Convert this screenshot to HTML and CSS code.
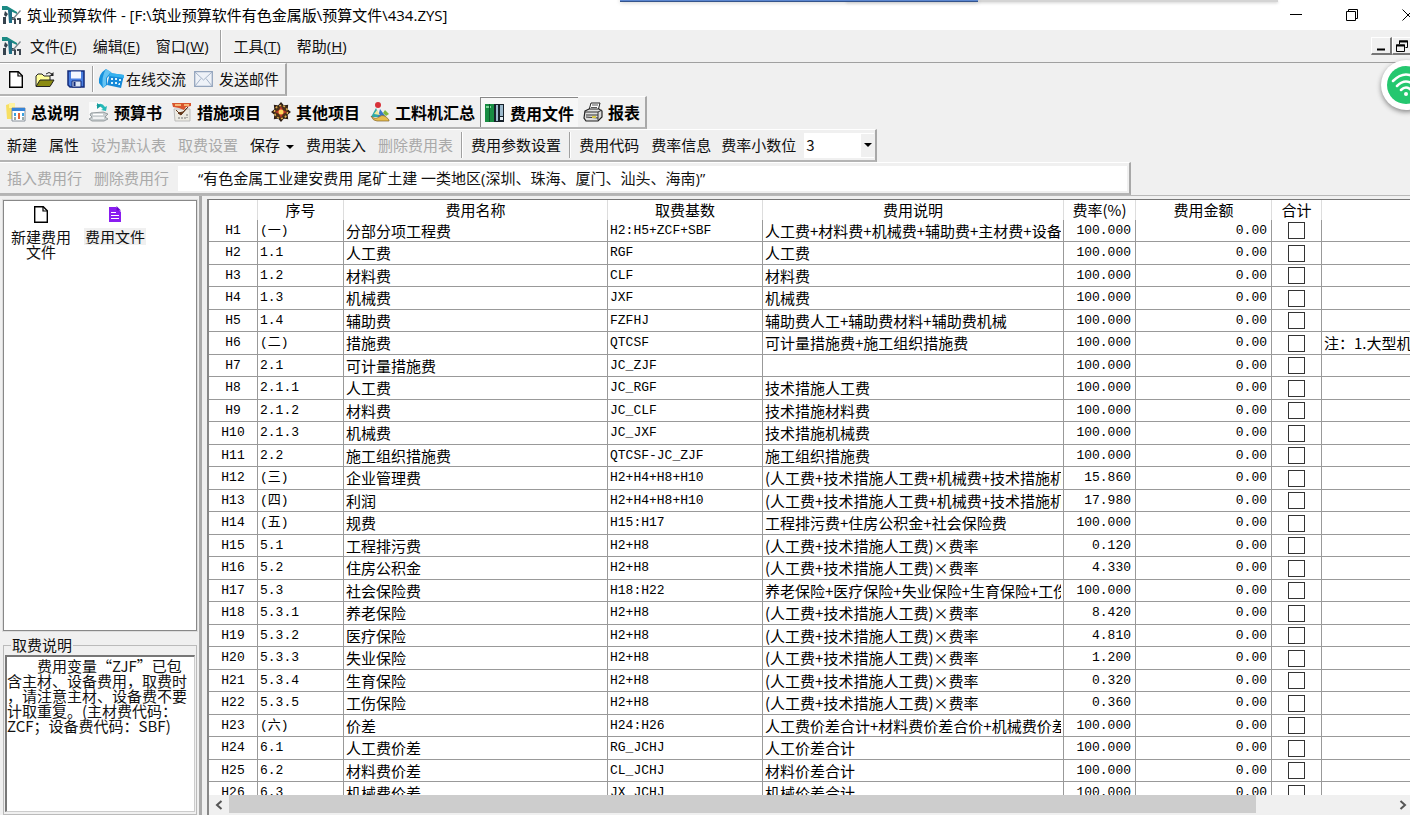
FILE: index.html
```html
<!DOCTYPE html>
<html lang="zh-CN">
<head>
<meta charset="utf-8">
<title>筑业预算软件</title>
<link rel="stylesheet" href="styles.css">
</head>
<body>
<svg class="defs" width="0" height="0" aria-hidden="true">
  <symbol id="logo" viewBox="0 0 20 20">
    <path d="M0 1h5l10 6v2L6 5H0z" fill="#1c8a84"/>
    <path d="M6 5h4v13H7z" fill="#1f6f86"/>
    <path d="M1 12h3v7H1zM3 6l3 3-2 3-2-2z" fill="#35424d"/>
    <path d="M10 12h2l2 2v5h-2v-4h-2zM15 13h4v6h-2v-4h-2z" fill="#3c4650"/>
    <path d="M18 5l1 1-8 9-1-1z" fill="#7a858c"/>
  </symbol>
  <symbol id="page" viewBox="0 0 14 17">
    <path d="M.7.7h8.600l4 4v11.600H.7z" fill="#fff" stroke="#000" stroke-width="1.400"/>
    <path d="M9 .7v4.300h4.300" fill="none" stroke="#000" stroke-width="1.200"/>
  </symbol>
</svg>
<div class="app">
  <div class="strip strip-blue"></div>
  <div class="strip strip-gray"></div>
  <header class="title">
    <svg class="logo"><use href="#logo"/></svg>
    <h1>筑业预算软件 - [F:\筑业预算软件有色金属版\预算文件\434.ZYS]</h1>
    <div class="win">
      <button aria-label="最小化"><svg width="12" height="12"><path d="M0 5.500h12" stroke="#000"/></svg></button>
      <button aria-label="还原"><svg width="12" height="12" fill="none" stroke="#000"><path d="M.5 2.500h9v9h-9zM2.500 2.500v-2h9v9h-2"/></svg></button>
      <button aria-label="关闭"><svg width="12" height="12"><path d="M.5.5l11 11M11.500.5l-11 11" stroke="#000"/></svg></button>
    </div>
  </header>
  <nav class="menu">
    <svg class="logo"><use href="#logo"/></svg>
    <button>文件(<u>F</u>)</button><button>编辑(<u>E</u>)</button><button>窗口(<u>W</u>)</button>
    <i class="sep"></i>
    <button>工具(<u>T</u>)</button><button>帮助(<u>H</u>)</button>
    <div class="mdi">
      <button aria-label="最小化文档"><svg width="10" height="10"><path d="M1 8.500h8" stroke="#000" stroke-width="2"/></svg></button>
      <button aria-label="还原文档"><svg width="12" height="12" fill="none" stroke="#000"><path d="M.5 5h8v6.500h-8zM3.500 4V1h8v6.500h-2"/><path d="M0 5.500h9M3 1.500h9" stroke-width="2"/></svg></button>
    </div>
  </nav>
  <div class="bar files">
    <button aria-label="新建"><svg width="14" height="17"><use href="#page"/></svg></button>
    <button aria-label="打开"><svg width="20" height="17"><path d="M1 15V5l2-2h4l2 2h6v4" fill="#ffff9c" stroke="#222"/><path d="M1 15.500L5 9h14l-4 6.500z" fill="#8a8a10" stroke="#222"/><path d="M11 3q3-3 6 0" fill="none" stroke="#222"/><path d="M18.500 1v4h-4z" fill="#222"/></svg></button>
    <button aria-label="保存"><svg width="18" height="18"><path d="M1 1h16v16H3l-2-2z" fill="#4a7fe0" stroke="#122a78" stroke-width="1.500"/><path d="M4 1.500h10v7H4z" fill="#f4f8ff"/><path d="M5 11h9v6H5z" fill="#dce6f6" stroke="#122a78"/><path d="M6.500 12h2v4h-2z" fill="#122a78"/></svg></button>
    <i class="sep"></i>
    <button class="tool chat"><svg width="27" height="22"><path d="M8 1q-8 5-7 14l4 5 4-3V10l5-5z" fill="#1791dc"/><path d="M8 1l5 3-5 6v7l-3 3q-2-11 3-19z" fill="#66c4f3"/><path d="M12 5l14 2-3 13-14-3z" fill="#1689d8"/><path d="M12 5l14 2v3L11 8z" fill="#35b2ef"/><path d="M13 10h2v2h-2zm4 0h2v2h-2zm4 1h2v2h-2zm-8 3h2v2h-2zm4 0h2v2h-2zm4 1h1v2h-2z" fill="#d9f4ff"/></svg>在线交流</button>
    <button class="tool mail"><svg width="19" height="16"><path d="M.7.7h17.600v14.600H.7z" fill="#eef2f8" stroke="#94a5bd" stroke-width="1.300"/><path d="M1 1l8.500 8L18 1M1 15l6-7.500M18 15l-6-7.500" fill="none" stroke="#a3b2c8"/></svg>发送邮件</button>
  </div>
  <div class="bar views">
    <button><svg viewBox="0 0 20 20"><path d="M0 3l3-1 2 2 4-2v6H6v9H1z" fill="#f7df62"/><path d="M3 1h6v5H3z" fill="#fff3a0"/><path d="M6 6h13v13H6z" fill="#fff" stroke="#87909a"/><path d="M6 6h13v3H6z" fill="#3684d8"/><path d="M8 11h2v3H8zm8 0h2v3h-2z" fill="#3aa0de"/><path d="M12 11h2v6h-2z" fill="#e2663a"/><path d="M8 15h2v3H8zm8 0h2v3h-2z" fill="#9aa"/></svg>总说明</button>
    <button><svg viewBox="0 0 20 20"><path d="M0 0h14v19H0z" fill="#fafafa"/><path d="M7 4q5-5 9 1l2-1-1 5-5-1 2-1q-3-4-7-3z" fill="#25b9b8"/><path d="M8 1l4 3-4 3z" fill="#179d9c"/><path d="M2 11l12-1 5 2-3 3 3 2-4 2H3l-3-2 3-2-2-2z" fill="#c9ced0" stroke="#858d90" stroke-width=".8"/><path d="M4 12.500h10M4 16h11" stroke="#fff" stroke-width="1.500"/></svg>预算书</button>
    <button><svg viewBox="0 0 20 20"><path d="M2 7h16v12H3z" fill="#eceae2" stroke="#bbb"/><path d="M0 1h19v3l-5 1-2 3-5-2-6-1z" fill="#d8552d"/><path d="M3 3h6M12 3h5" stroke="#ffd58a" stroke-width="1.500"/><path d="M16 5l-7 8-3-2 5-1zM4 8l5 5" fill="#62371a" stroke="#62371a"/><path d="M6 16h8M15 12v4" stroke="#777" stroke-dasharray="2 1"/></svg>措施项目</button>
    <button><svg viewBox="0 0 20 20"><path d="M10 1l2.500 3 4-.5-.5 4 3 2.500-3 2.500.5 4-4-.5-2.500 3-2.500-3-4 .5.5-4L1 10l3-2.500-.5-4 4 .5z" fill="#4a3218" stroke="#2a1c14" stroke-width="1.200"/><circle cx="10" cy="10" r="6.500" fill="none" stroke="#e0b050" stroke-width="1.500" stroke-dasharray="2 2"/><path d="M10 4l2 4 4 2-4 2-2 4-2-4-4-2 4-2z" fill="#bb3629"/><circle cx="10" cy="10" r="2.500" fill="#ffd65a"/></svg>其他项目</button>
    <button><svg viewBox="0 0 20 20"><circle cx="8" cy="3" r="3" fill="#d8323a"/><path d="M6 6l-5 9h9z" fill="#2fa8a5"/><path d="M10 7l6 8H8z" fill="#3676c8"/><path d="M15 8l4 4-3 2-3-3z" fill="#80b83d"/><path d="M1 14q4 4 8 1 5-4 10 3v1H7q-4 0-6-5z" fill="#e8bd4b" stroke="#836630" stroke-width=".7"/><path d="M4 12l3-4 3 5z" fill="#f3e7a0"/></svg>工料机汇总</button>
    <button class="on" aria-pressed="true"><svg viewBox="0 0 20 20"><path d="M0 1h9v18H0z" fill="#188c42"/><path d="M1 3h5v2H1z" fill="#7ed59b"/><path d="M4 1h1v18H4z" fill="#0b5c2a"/><path d="M9 1h10v18H9z" fill="#17212a"/><path d="M11 2h2v16h-2zm4 0h3v11h-3z" fill="#9cb9cc"/><path d="M15 14h3v3h-3z" fill="#e5eef4"/></svg>费用文件</button>
    <button><svg viewBox="0 0 20 20"><path d="M6 8l2-7h9l-2 8z" fill="#fff" stroke="#222"/><path d="M9 3h6M8 5.500h6" stroke="#555"/><path d="M2 9l4-2h10l3 2v6l-4 4H3l-2-3z" fill="#ddd" stroke="#222" stroke-width="1.200"/><path d="M2 10h13v8M15 10l4-2M3 15l12 1M3 13h12" fill="none" stroke="#333"/><path d="M9 14h4v2H9z" fill="#d8c84a"/></svg>报表</button>
  </div>
  <div class="bar cmds">
    <button>新建</button><button>属性</button><button disabled>设为默认表</button><button disabled>取费设置</button><button>保存<i class="caret"></i></button><button>费用装入</button><button disabled>删除费用表</button>
    <i class="sep"></i><button>费用参数设置</button><i class="sep"></i>
    <button>费用代码</button><button>费率信息</button>
    <label for="digits">费率小数位</label>
    <span class="pick"><select id="digits"><option>3</option></select><span class="drop"><i class="caret"></i></span></span>
  </div>
  <div class="bar lines">
    <button disabled>插入费用行</button><button disabled>删除费用行</button>
    <input type="text" aria-label="费用名称" value="“有色金属工业建安费用 尾矿土建 一类地区(深圳、珠海、厦门、汕头、海南)”">
  </div>
  <main>
    <aside>
      <div class="list">
        <button><svg width="14" height="17"><use href="#page"/></svg><span>新建费用文件</span></button>
        <button class="sel"><svg width="14" height="17"><path d="M1 1h7l5 5v10H1z" fill="#8a1df0"/><path d="M8.500 0L13 4.500H8.500z" fill="#6a0ad0"/><path d="M3 6.500h5M3 9.500h8M3 12.500h8" stroke="#fff"/></svg><span>费用文件</span></button>
      </div>
      <fieldset>
        <legend><label for="note">取费说明</label></legend>
        <textarea id="note" readonly wrap="off">　　费用变量“ZJF”已包
含主材、设备费用，取费时
，请注意主材、设备费不要
计取重复。(主材费代码：
ZCF；设备费代码：SBF)</textarea>
      </fieldset>
    </aside>
    <section class="grid">
      <div class="view">
        <table>
          <colgroup><col class="c-id"><col class="c-no"><col class="c-name"><col class="c-base"><col class="c-desc"><col class="c-rate"><col class="c-sum"><col class="c-tot"><col></colgroup>
          <thead><tr><th><th>序号<th>费用名称<th>取费基数<th>费用说明<th>费率(%)<th>费用金额<th>合计<th></thead>
          <tbody>
<tr><td>H1<td>(一)<td>分部分项工程费<td>H2:H5+ZCF+SBF<td><div class="clip">人工费+材料费+机械费+辅助费+主材费+设备费</div><td>100.000<td>0.00<td><input type="checkbox" aria-label="合计 H1"><td>
<tr><td>H2<td>1.1<td>人工费<td>RGF<td>人工费<td>100.000<td>0.00<td><input type="checkbox" aria-label="合计 H2"><td>
<tr><td>H3<td>1.2<td>材料费<td>CLF<td>材料费<td>100.000<td>0.00<td><input type="checkbox" aria-label="合计 H3"><td>
<tr><td>H4<td>1.3<td>机械费<td>JXF<td>机械费<td>100.000<td>0.00<td><input type="checkbox" aria-label="合计 H4"><td>
<tr><td>H5<td>1.4<td>辅助费<td>FZFHJ<td>辅助费人工+辅助费材料+辅助费机械<td>100.000<td>0.00<td><input type="checkbox" aria-label="合计 H5"><td>
<tr><td>H6<td>(二)<td>措施费<td>QTCSF<td>可计量措施费+施工组织措施费<td>100.000<td>0.00<td><input type="checkbox" aria-label="合计 H6"><td>注：1.大型机械
<tr><td>H7<td>2.1<td>可计量措施费<td>JC_ZJF<td><td>100.000<td>0.00<td><input type="checkbox" aria-label="合计 H7"><td>
<tr><td>H8<td>2.1.1<td>人工费<td>JC_RGF<td>技术措施人工费<td>100.000<td>0.00<td><input type="checkbox" aria-label="合计 H8"><td>
<tr><td>H9<td>2.1.2<td>材料费<td>JC_CLF<td>技术措施材料费<td>100.000<td>0.00<td><input type="checkbox" aria-label="合计 H9"><td>
<tr><td>H10<td>2.1.3<td>机械费<td>JC_JXF<td>技术措施机械费<td>100.000<td>0.00<td><input type="checkbox" aria-label="合计 H10"><td>
<tr><td>H11<td>2.2<td>施工组织措施费<td>QTCSF-JC_ZJF<td>施工组织措施费<td>100.000<td>0.00<td><input type="checkbox" aria-label="合计 H11"><td>
<tr><td>H12<td>(三)<td>企业管理费<td>H2+H4+H8+H10<td><div class="clip">(人工费+技术措施人工费+机械费+技术措施机械费)</div><td>15.860<td>0.00<td><input type="checkbox" aria-label="合计 H12"><td>
<tr><td>H13<td>(四)<td>利润<td>H2+H4+H8+H10<td><div class="clip">(人工费+技术措施人工费+机械费+技术措施机械费)</div><td>17.980<td>0.00<td><input type="checkbox" aria-label="合计 H13"><td>
<tr><td>H14<td>(五)<td>规费<td>H15:H17<td>工程排污费+住房公积金+社会保险费<td>100.000<td>0.00<td><input type="checkbox" aria-label="合计 H14"><td>
<tr><td>H15<td>5.1<td>工程排污费<td>H2+H8<td>(人工费+技术措施人工费)×费率<td>0.120<td>0.00<td><input type="checkbox" aria-label="合计 H15"><td>
<tr><td>H16<td>5.2<td>住房公积金<td>H2+H8<td>(人工费+技术措施人工费)×费率<td>4.330<td>0.00<td><input type="checkbox" aria-label="合计 H16"><td>
<tr><td>H17<td>5.3<td>社会保险费<td>H18:H22<td><div class="clip">养老保险+医疗保险+失业保险+生育保险+工伤保险</div><td>100.000<td>0.00<td><input type="checkbox" aria-label="合计 H17"><td>
<tr><td>H18<td>5.3.1<td>养老保险<td>H2+H8<td>(人工费+技术措施人工费)×费率<td>8.420<td>0.00<td><input type="checkbox" aria-label="合计 H18"><td>
<tr><td>H19<td>5.3.2<td>医疗保险<td>H2+H8<td>(人工费+技术措施人工费)×费率<td>4.810<td>0.00<td><input type="checkbox" aria-label="合计 H19"><td>
<tr><td>H20<td>5.3.3<td>失业保险<td>H2+H8<td>(人工费+技术措施人工费)×费率<td>1.200<td>0.00<td><input type="checkbox" aria-label="合计 H20"><td>
<tr><td>H21<td>5.3.4<td>生育保险<td>H2+H8<td>(人工费+技术措施人工费)×费率<td>0.320<td>0.00<td><input type="checkbox" aria-label="合计 H21"><td>
<tr><td>H22<td>5.3.5<td>工伤保险<td>H2+H8<td>(人工费+技术措施人工费)×费率<td>0.360<td>0.00<td><input type="checkbox" aria-label="合计 H22"><td>
<tr><td>H23<td>(六)<td>价差<td>H24:H26<td><div class="clip">人工费价差合计+材料费价差合价+机械费价差</div><td>100.000<td>0.00<td><input type="checkbox" aria-label="合计 H23"><td>
<tr><td>H24<td>6.1<td>人工费价差<td>RG_JCHJ<td>人工价差合计<td>100.000<td>0.00<td><input type="checkbox" aria-label="合计 H24"><td>
<tr><td>H25<td>6.2<td>材料费价差<td>CL_JCHJ<td>材料价差合计<td>100.000<td>0.00<td><input type="checkbox" aria-label="合计 H25"><td>
<tr><td>H26<td>6.3<td>机械费价差<td>JX_JCHJ<td>机械价差合计<td>100.000<td>0.00<td><input type="checkbox" aria-label="合计 H26"><td>
          </tbody>
        </table>
      </div>
      <div class="scroll">
        <button aria-label="向左"><svg width="8" height="10"><path d="M6.500 1L2 5l4.500 4" fill="none" stroke="#555" stroke-width="2"/></svg></button>
        <div class="track"><div class="thumb"></div></div>
        <button aria-label="向右"><svg width="8" height="10"><path d="M1.500 1L6 5 1.500 9" fill="none" stroke="#555" stroke-width="2"/></svg></button>
      </div>
    </section>
  </main>
  <button class="wifi" aria-label="无线网络"><svg width="38" height="38"><circle cx="19" cy="19" r="19" fill="#25c76f"/><g fill="none" stroke="#fff" stroke-width="2.500" stroke-linecap="round"><path d="M6 15q13-13 26 0"/><path d="M10 20q9-9 18 0"/><path d="M14 24q5-5 10 0"/></g><circle cx="19" cy="28" r="2" fill="#fff"/></svg></button>
</div>
</body>
</html>
```
FILE: styles.css
```css
* { box-sizing: border-box; }
body { margin: 0; color: #111; font: 15px/20px "Noto Sans CJK SC", sans-serif; }
button, input, select, textarea { font: inherit; color: inherit; }
button { border: 0; padding: 0; background: none; white-space: nowrap; }
button:disabled { color: #a9a9a9; }
svg { display: block; flex: none; }
.defs { position: absolute; }
.app { position: relative; display: flex; flex-direction: column; height: 100vh; overflow: hidden; background: #f0f0f0; }

.strip { position: absolute; top: 0; height: 2px; }
.strip-blue { left: 44%; width: 358px; background: #5b86cf; border-bottom: 1px solid #34548c; box-shadow: 0 0 4px #aaa; z-index: 1; }
.strip-gray { left: 60%; width: 432px; background: #d4d4d4; box-shadow: 0 1px 3px #ccc; }

.title { display: flex; align-items: center; height: 30px; padding-left: 2px; background: #fff; }
.title h1 { flex: 1; margin: 0 0 0 5px; font: 15px/20px "Open Sans", "Noto Sans CJK SC", sans-serif; color: #000; }
.logo { width: 20px; height: 20px; }
.win { display: flex; margin-right: -26px; }
.win button { display: flex; justify-content: center; width: 56px; }

.menu { display: flex; align-items: center; height: 33px; padding-left: 2px; border-bottom: 1px solid #a0a0a0; font-family: "Open Sans", "Noto Sans CJK SC", sans-serif; }
.menu button { padding: 0 8px; }
.menu .sep { margin: 0 4px 0 3px; }
.sep { align-self: stretch; width: 2px; margin: 2px 3px; border-left: 1px solid #a0a0a0; border-right: 1px solid #fff; }
.mdi { display: flex; margin-left: auto; margin-right: -3px; }
.menu .mdi button { display: flex; align-items: center; justify-content: center; width: 21px; height: 18px; padding: 0; border: 1px solid #fff; border-right: 2px solid #777; border-bottom: 2px solid #777; }

.bar { display: flex; align-items: center; align-self: flex-start; height: 33px; padding: 0 6px 0 1px; border-top: 1px solid #fff; border-right: 2px solid #a8a8a8; border-bottom: 2px solid #b4b4b4; }
.files { padding-left: 9px; }
.files button + button { margin-left: 12px; }
.files .sep { margin-left: 7px; margin-right: 4px; }
.tool { display: flex; align-items: center; gap: 1px; }
.files .mail { gap: 6px; margin-left: 8px; }
.views { padding-right: 0; font-size: 16px; }
.views button { display: flex; align-items: center; gap: 5px; height: 30px; padding: 0 5px; font-weight: 700; color: #000; }
.views svg { width: 20px; height: 20px; }
.views .on { border-top: 1px solid #888; border-left: 1px solid #888; background: #f7f7f7; padding: 0 4px; }
.cmds { padding-right: 1px; }
.cmds .sep { margin: 2px; }
.cmds button, .lines button { padding: 0 6px; }
.caret { display: inline-block; border: 4px solid transparent; border-top-color: #000; border-bottom: 0; vertical-align: middle; }
.cmds button .caret { margin-left: 6px; }
.cmds label { padding: 0 8px 0 4px; }
.pick { position: relative; display: flex; }
.pick select { width: 70px; height: 25px; padding: 0 2px; border: 0; background: #fff; appearance: none; }
.drop { position: absolute; right: 0; top: 1px; width: 13px; height: 23px; background: #f0f0f0; display: flex; align-items: center; justify-content: center; pointer-events: none; }
.lines { width: 1131px; max-width: 100%; padding-right: 2px; }
.lines button:nth-child(2) { margin-right: 3px; }
.lines input { flex: 1; min-width: 0; height: 25px; padding: 0 20px 2px; border: 0; background: #fff; font-family: "Open Sans", "Noto Sans CJK SC", sans-serif; }

main { flex: 1; display: flex; min-height: 0; border-top: 1px solid #b8b8b8; }
aside { display: flex; flex-direction: column; gap: 4px; width: 202px; padding: 4px 2px 0 3px; border-right: 3px solid #aaa; }
.list { flex: 1; display: flex; align-items: flex-start; padding: 5px 0; border: 1px solid #888; background: #fff; outline: 1px solid #ddd; }
.list button { display: flex; flex-direction: column; align-items: center; gap: 6px; width: 74px; line-height: 15px; white-space: normal; }
.list span { width: 60px; }
.list .sel span { background: #f0f0f0; outline: 1px solid #f0f0f0; }
fieldset { margin: 0; padding: 0 1px 2px; border: 1px solid #bbb; }
legend { margin-left: 6px; padding: 0 1px; line-height: 20px; }
textarea { display: block; width: 100%; height: 157px; padding: 1px 0; border: 1px solid #ccc; border-top: 2px solid #777; border-left: 2px solid #777; background: #fff; line-height: 15px; resize: none; overflow: hidden; }

.grid { flex: 1; min-width: 0; display: flex; flex-direction: column; margin: 3px 0 0 5px; border-top: 1px solid #777; border-left: 2px solid #888; }
.view { flex: 1; min-height: 0; overflow: hidden; background: #fff; }
table { width: 100%; table-layout: fixed; border-collapse: separate; border-spacing: 0; color: #000; }
.c-id { width: 49px; } .c-no { width: 86px; } .c-name { width: 264px; } .c-base { width: 155px; } .c-desc { width: 301px; } .c-rate { width: 72px; } .c-sum { width: 136px; } .c-tot { width: 50px; }
th { height: 20px; padding: 0; border-right: 1px solid #ddd; font-weight: 400; line-height: 20px; }
td { height: 22px; padding: 0 2px; border-right: 1px solid #999; border-bottom: 1px solid #999; line-height: 20px; white-space: nowrap; overflow: hidden; }
tr:nth-child(even) td { height: 23px; }
td:nth-child(1), td:nth-child(2), td:nth-child(4), td:nth-child(6), td:nth-child(7) { font-family: "Liberation Mono", "Noto Sans CJK SC", monospace; font-size: 13px; }
td:nth-child(1), td:nth-child(8) { text-align: center; }
td:nth-child(6), td:nth-child(7) { text-align: right; padding-right: 4px; }
th:last-child, td:last-child { border-right: 0; }
.clip { overflow: hidden; }
td input { appearance: none; display: block; width: 17px; height: 17px; margin: 0 auto; border: 1px solid #333; background: #fff; }
.scroll { display: flex; height: 20px; background: #f0f0f0; }
.scroll button { display: flex; align-items: center; justify-content: center; width: 20px; }
.scroll button:last-child { width: 14px; }
.track { flex: 1; }
.thumb { width: 88%; height: 18px; background: #cdcdcd; }

.wifi { position: absolute; top: 60px; right: -21px; padding: 6px; border-radius: 50%; background: #fff; box-shadow: 0 2px 5px #888; }
```
